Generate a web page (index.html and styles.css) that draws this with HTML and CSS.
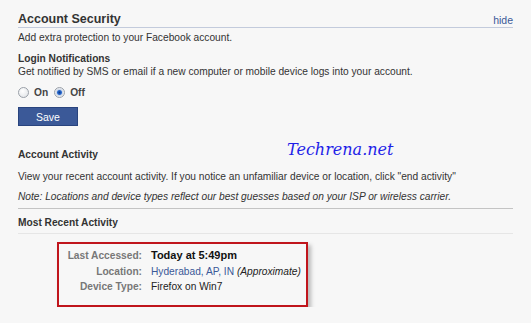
FILE: index.html
```html
<!DOCTYPE html>
<html>
<head>
	<title>Account Security</title>
	<link rel="stylesheet" href="styles.css">
</head>
<body>
	<div class="page">
		<div class="section-head">
			<span class="section-title">Account Security</span>
			<a class="hide-link" href="#">hide</a>
		</div>
		<div class="intro">Add extra protection to your Facebook account.</div>

		<div class="sub-title">Login Notifications</div>
		<div class="desc">Get notified by SMS or email if a new computer or mobile device logs into your account.</div>
		<div class="radios">
			<span class="radio"></span><span class="radio-label">On</span>
			<span class="radio checked"></span><span class="radio-label">Off</span>
		</div>
		<button class="save-btn">Save</button>

		<div class="sub-title activity-title">Account Activity</div>
		<div class="desc activity-desc">View your recent account activity. If you notice an unfamiliar device or location, click "end activity"</div>
		<div class="note">Note: Locations and device types reflect our best guesses based on your ISP or wireless carrier.</div>

		<div class="recent-head">Most Recent Activity</div>

		<div class="recent-box">
			<div class="recent-row">
				<span class="recent-label">Last Accessed:</span>
				<span class="recent-value strong">Today at 5:49pm</span>
			</div>
			<div class="recent-row">
				<span class="recent-label">Location:</span>
				<span class="recent-value"><a href="#">Hyderabad, AP, IN</a> <i>(Approximate)</i></span>
			</div>
			<div class="recent-row">
				<span class="recent-label">Device Type:</span>
				<span class="recent-value">Firefox on Win7</span>
			</div>
		</div>

		<div class="watermark">Techrena.net</div>
	</div>
</body>
</html>
```

FILE: styles.css
```css
body{
	margin: 0;
	background-color: #f7f7f7;
	color: #333;
	font-family: 'Liberation Sans', Arial, sans-serif;
	font-size: 10.2px;
}
a{
	color: #3b5998;
	text-decoration: none;
}
.page{
	position: relative;
	width: 495px;
	padding: 12px 0 0 18px;
}
.section-head{
	display: flex;
	justify-content: space-between;
	align-items: flex-end;
	border-bottom: 1px solid #c3cbdc;
	padding-bottom: 1px;
}
.section-title{
	font-size: 12.5px;
	font-weight: bold;
	color: #333;
}
.hide-link{
	font-size: 10.5px;
}
.intro{
	margin-top: 3px;
	line-height: 13px;
}
.sub-title{
	margin-top: 8px;
	font-weight: bold;
	line-height: 13px;
}
.desc{
	line-height: 13px;
	white-space: nowrap;
}
.radios{
	display: flex;
	align-items: center;
	margin-top: 8px;
	height: 13px;
	font-weight: bold;
	color: #444;
}
.radio{
	width: 11px;
	height: 11px;
	border: 1px solid #9aa0a8;
	border-radius: 50%;
	background: radial-gradient(circle at 40% 35%, #ffffff, #dde0e4);
	box-sizing: border-box;
	margin-right: 5px;
}
.radio.checked{
	background: radial-gradient(circle, #0a3a8a 0, #2a6ad0 2px, #cfd8e6 3px, #f4f6f8 5px);
}
.radio-label{
	margin-right: 6px;
}
.save-btn{
	display: block;
	margin-top: 8px;
	width: 60px;
	height: 19px;
	background-color: #3b5998;
	border: 1px solid #29447e;
	color: white;
	font-family: 'Liberation Sans', Arial, sans-serif;
	font-size: 10.5px;
	padding: 0;
}
.activity-title{
	margin-top: 22px;
}
.activity-desc{
	margin-top: 9px;
}
.note{
	margin-top: 7px;
	font-style: italic;
	line-height: 13px;
	padding-bottom: 5px;
	border-bottom: 1px solid #c4c4c4;
}
.recent-head{
	font-weight: bold;
	padding: 7px 0 4px;
	line-height: 13px;
	border-bottom: 1px solid #e6e6e6;
}
.recent-box{
	margin: 8px 0 0 39px;
	width: 251px;
	height: 65px;
	border: 2px solid #c0151c;
	box-shadow: 3px 3px 4px rgba(0,0,0,0.25);
	padding-top: 4px;
	box-sizing: border-box;
}
.recent-row{
	display: flex;
	line-height: 15.5px;
	white-space: nowrap;
}
.recent-label{
	width: 83px;
	text-align: right;
	font-weight: bold;
	color: #777;
	margin-right: 9px;
}
.recent-value{
	color: #222;
}
.recent-value.strong{
	font-weight: bold;
	color: #111;
	font-size: 11px;
}
.watermark{
	position: absolute;
	left: 287px;
	top: 140px;
	color: #1f1fe8;
	font-family: 'DejaVu Serif', serif;
	font-style: italic;
	font-size: 16px;
}
```
